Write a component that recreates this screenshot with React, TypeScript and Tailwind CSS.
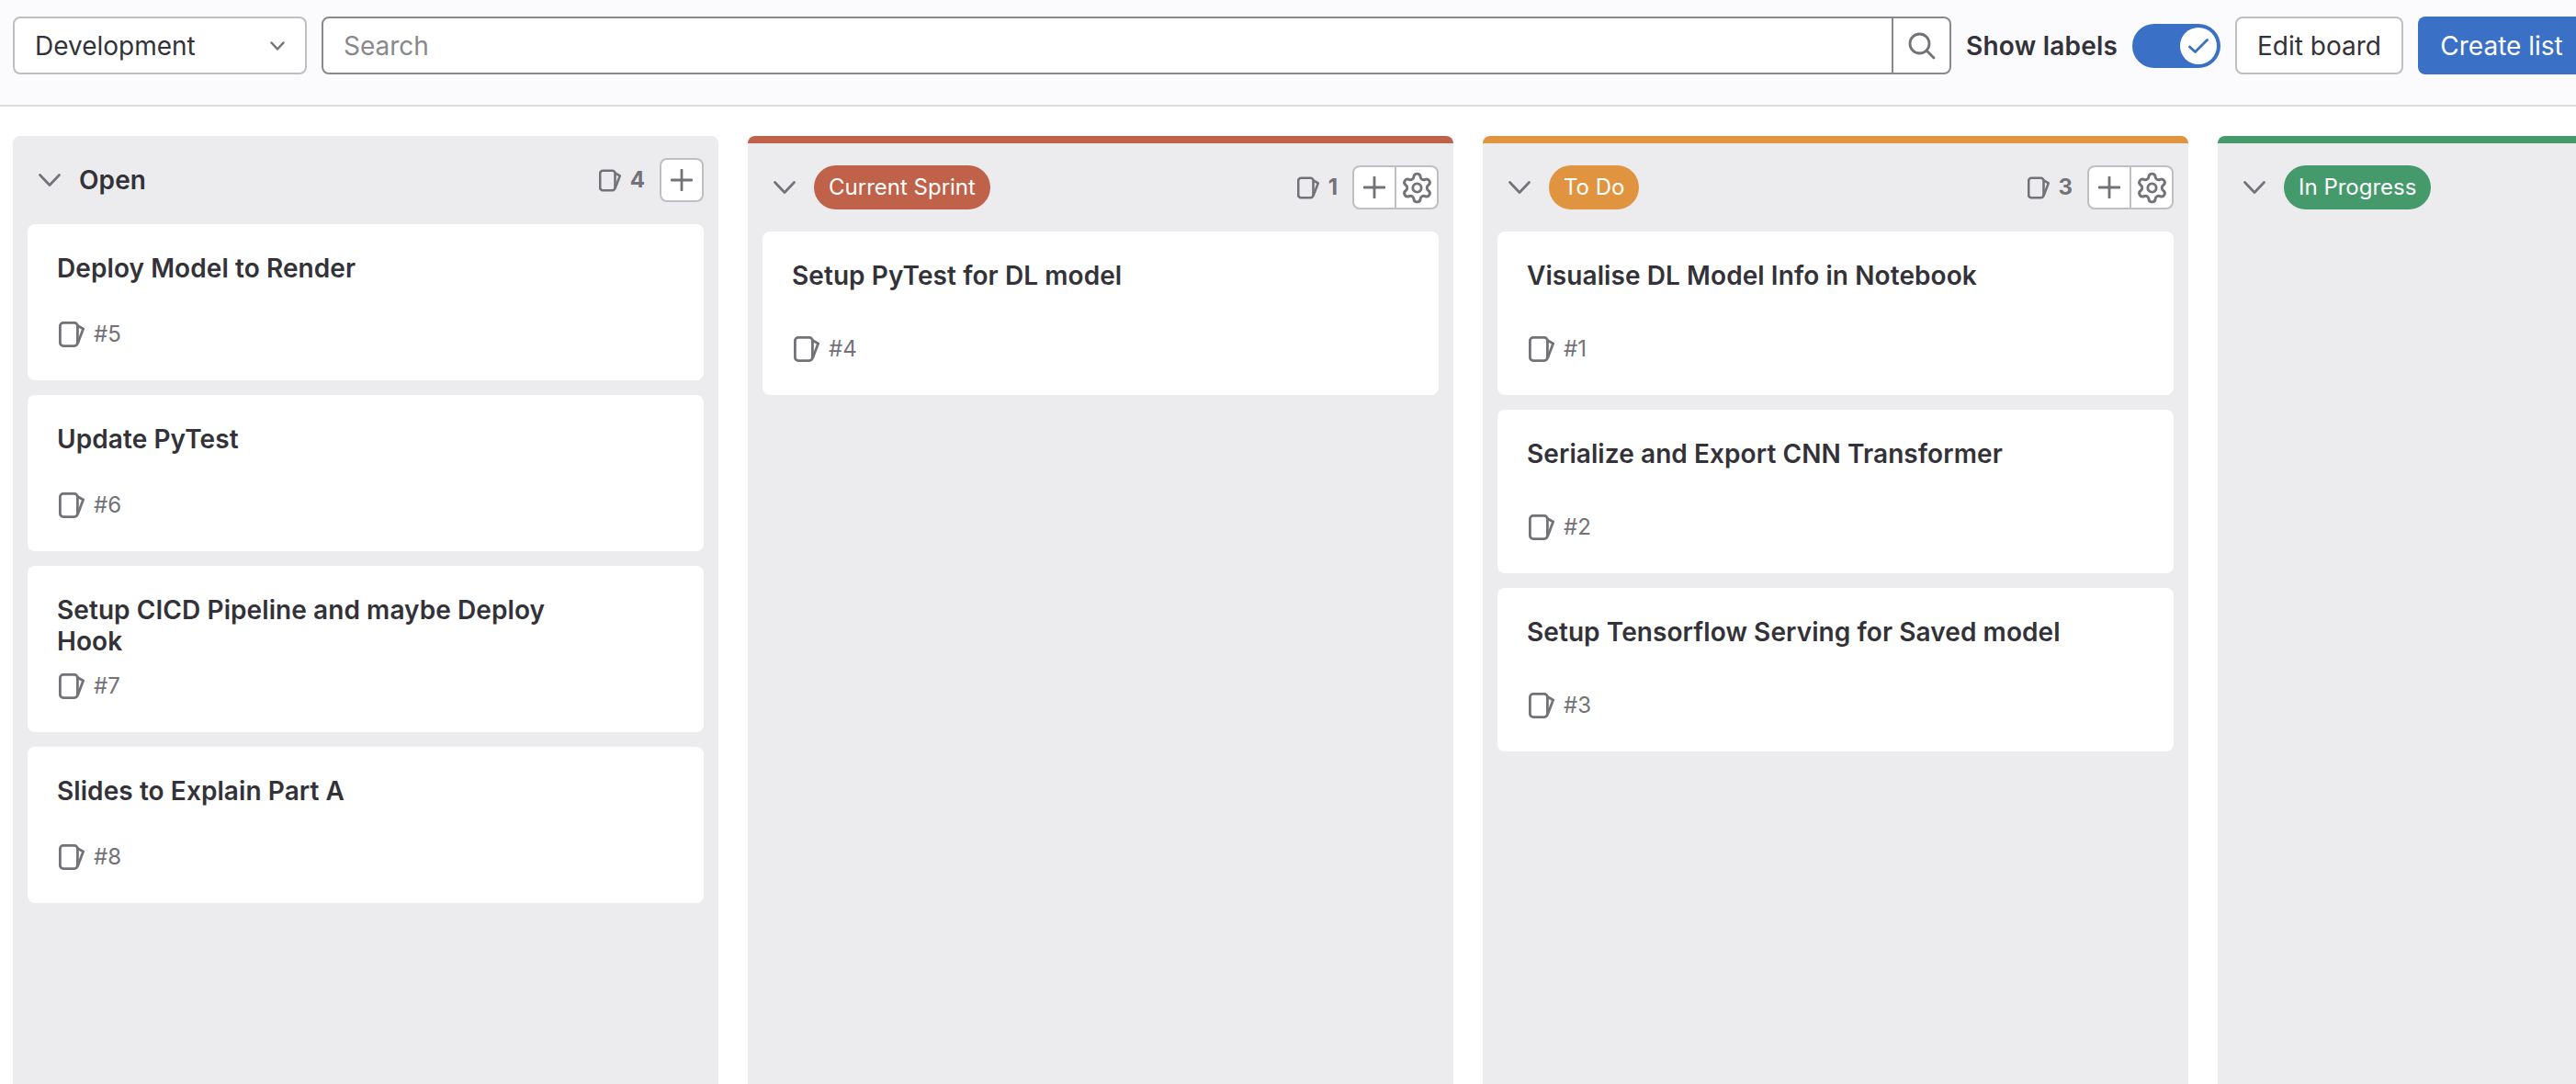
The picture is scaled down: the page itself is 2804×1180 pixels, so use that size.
import React from "react";
import { Settings } from "lucide-react";

function IssueIcon({ small }: { small?: boolean }) {
  return (
    <svg viewBox="0 0 28 28" className={small ? "w-[24px] h-[25px] shrink-0" : "w-[28px] h-[28px] shrink-0"} fill="none" stroke="#737278" strokeWidth={small ? 3 : 2.8} strokeLinejoin="round">
      <rect x="1.4" y="1.4" width="19" height="25.2" rx="3.5" />
      <path d="M20.5 4.5 L26.6 8 L20.5 24" />
    </svg>
  );
}

function Chevron() {
  return (
    <svg viewBox="0 0 24 14" className="w-[24px] h-[14px] shrink-0" fill="none" stroke="#737278" strokeWidth="2.7" strokeLinecap="round" strokeLinejoin="round">
      <path d="M1.5 1.5 L12 12.5 L22.5 1.5" />
    </svg>
  );
}

function Plus() {
  return (
    <svg viewBox="0 0 24 24" className="w-[24px] h-[24px]" fill="none" stroke="#737278" strokeWidth="2.8" strokeLinecap="round">
      <path d="M12 1 V23 M1 12 H23" />
    </svg>
  );
}

type CardT = { title: string; num: number };

function Card({ card, minH }: { card: CardT; minH: string }) {
  return (
    <div className={`bg-white rounded-[8px] pt-[31px] pb-[34px] pl-[32px] pr-[110px] flex flex-col justify-between gap-[16px] ${minH}`}>
      <div className="text-[28px] leading-[34px] font-semibold tracking-[0.08px] text-[#333238]">{card.title}</div>
      <div className="flex items-center h-[32px] pl-[2px] gap-[10px]">
        <IssueIcon />
        <span className="text-[24px] text-[#737278]">#{card.num}</span>
      </div>
    </div>
  );
}

function Column({ label, color, count, cards }: { label: string; color?: string; count?: number; cards: CardT[] }) {
  const open = !color;
  return (
    <div className={`w-[768px] shrink-0 bg-[#ececef] rounded-t-[8px] ${color ?? ""}`}>
      <div className="h-[96px] flex items-center pl-[28px] pr-[16px]">
        <div className="mr-[20px]"><Chevron /></div>
        {open ? (
          <span className="text-[28px] font-semibold tracking-[0.08px] text-[#333238]">{label}</span>
        ) : (
          <span className={`h-[48px] px-[16px] rounded-full flex items-center text-[24px] text-white ${label === "Current Sprint" ? "bg-[#c0614a]" : label === "To Do" ? "bg-[#e0943f]" : "bg-[#459a6c]"}`}>{label}</span>
        )}
        {count !== undefined && (
          <div className="ml-auto flex items-center">
            <IssueIcon small />
            <span className="ml-[10px] mr-[16px] text-[24px] font-bold text-[#737278]">{count}</span>
            <div className="flex h-[48px] bg-white border-2 border-[#bfbfc3] rounded-[8px]">
              <div className="w-[44px] flex items-center justify-center"><Plus /></div>
              {!open && (
                <div className="w-[46px] border-l-2 border-[#bfbfc3] flex items-center justify-center">
                  <Settings size={37} color="#737278" strokeWidth={1.9} />
                </div>
              )}
            </div>
          </div>
        )}
      </div>
      <div className="flex flex-col gap-[16px] px-[16px]">
        {cards.map((c) => (
          <Card key={c.num} card={c} minH={open ? "min-h-[170px]" : "min-h-[178px]"} />
        ))}
      </div>
    </div>
  );
}

export default function App() {
  return (
    <div className="w-[2804px] h-screen overflow-hidden flex flex-col bg-white font-['Inter',sans-serif] text-[#333238]">
      <div className="h-[116px] shrink-0 bg-[#fbfafd] border-b-2 border-[#dcdcde] overflow-hidden">
        <div className="w-[2814px] pl-[14px] pt-[18px] flex items-center gap-[16px]">
          <div className="w-[320px] h-[63px] bg-white border-2 border-[#bfbfc3] rounded-[8px] pl-[22px] pr-[22px] flex items-center justify-between text-[28px]">
            <span>Development</span>
            <svg viewBox="0 0 16 10" className="w-[16px] h-[10px]" fill="none" stroke="#737278" strokeWidth="2.4" strokeLinecap="round" strokeLinejoin="round"><path d="M1.5 1.5 L8 8.5 L14.5 1.5" /></svg>
          </div>
          <div className="flex-1 h-[63px] bg-white border-2 border-[#89888d] rounded-[8px] flex items-center">
            <span className="flex-1 pl-[22px] text-[28px] text-[#89888d]">Search</span>
            <div className="w-[63px] h-full border-l-2 border-[#89888d] flex items-center justify-center">
              <svg viewBox="0 0 30 30" className="w-[30px] h-[30px]" fill="none" stroke="#737278" strokeWidth="2.8" strokeLinecap="round"><circle cx="12.5" cy="12.5" r="10.5" /><path d="M20.5 20.5 L28 28" /></svg>
            </div>
          </div>
          <span className="text-[28px] font-semibold tracking-[0.2px]">Show labels</span>
          <div className="w-[96px] h-[48px] rounded-full bg-[#3a70c5] flex items-center justify-end pr-[4px]">
            <div className="w-[40px] h-[40px] rounded-full bg-white flex items-center justify-center">
              <svg viewBox="0 0 22 16" className="w-[22px] h-[16px]" fill="none" stroke="#3a70c5" strokeWidth="2.8" strokeLinecap="round" strokeLinejoin="round"><path d="M1.5 9 L7.5 14.5 L20.5 1.5" /></svg>
            </div>
          </div>
          <div className="w-[183px] h-[63px] bg-white border-2 border-[#bfbfc3] rounded-[8px] flex items-center justify-center text-[28px]">Edit board</div>
          <div className="w-[182px] h-[63px] bg-[#3a70c5] rounded-[8px] flex items-center justify-center text-[28px] text-white">Create list</div>
        </div>
      </div>
      <div className="flex-1 min-h-0 overflow-hidden flex gap-[32px] pl-[14px] pt-[32px]">
        <Column label="Open" count={4} cards={[
          { title: "Deploy Model to Render", num: 5 },
          { title: "Update PyTest", num: 6 },
          { title: "Setup CICD Pipeline and maybe Deploy Hook", num: 7 },
          { title: "Slides to Explain Part A", num: 8 },
        ]} />
        <Column label="Current Sprint" color="border-t-8 border-[#c0614a]" count={1} cards={[
          { title: "Setup PyTest for DL model", num: 4 },
        ]} />
        <Column label="To Do" color="border-t-8 border-[#e0943f]" count={3} cards={[
          { title: "Visualise DL Model Info in Notebook", num: 1 },
          { title: "Serialize and Export CNN Transformer", num: 2 },
          { title: "Setup Tensorflow Serving for Saved model", num: 3 },
        ]} />
        <Column label="In Progress" color="border-t-8 border-[#459a6c]" cards={[]} />
      </div>
    </div>
  );
}
